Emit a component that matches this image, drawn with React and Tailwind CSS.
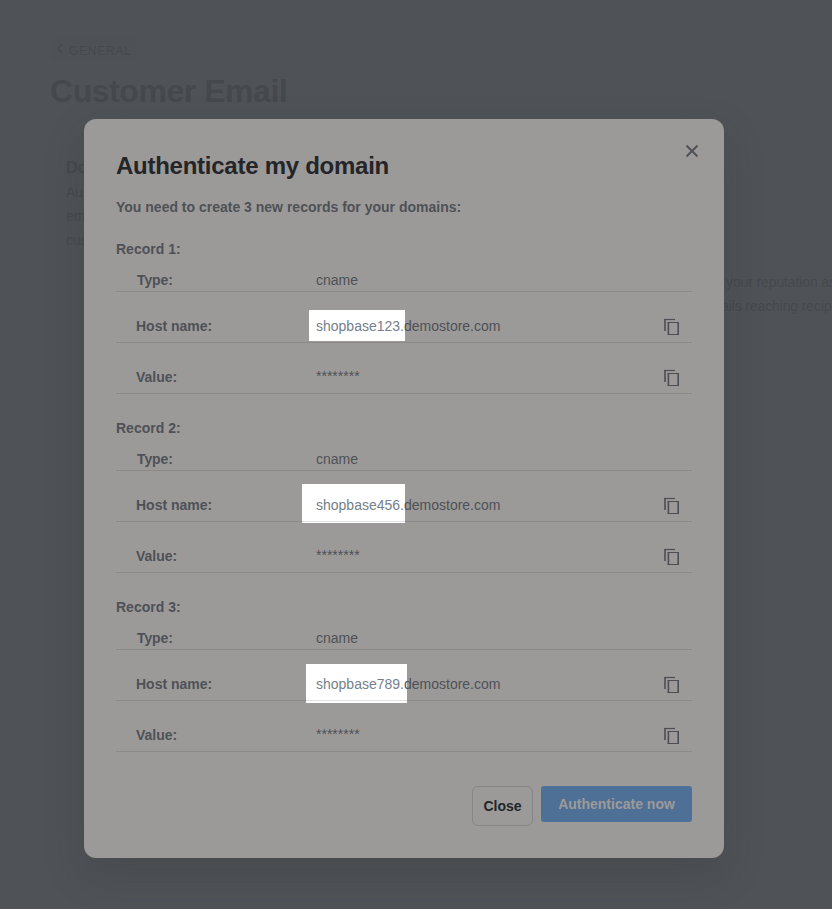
import React from "react";

const records = [
  {
    id: 1,
    host: "shopbase123.",
    highlight: "left-[309px] -ml-[116px] top-[18px] h-[31px] w-[96px]",
  },
  {
    id: 2,
    host: "shopbase456.",
    highlight: "left-[302px] -ml-[116px] top-[13px] h-[39px] w-[103px]",
  },
  {
    id: 3,
    host: "shopbase789.",
    highlight: "left-[306px] -ml-[116px] top-[14px] h-[39px] w-[101px]",
  },
];

function CopyIcon() {
  return (
    <svg
      className="mt-[2px] mr-[12px] h-[17px] w-4 shrink-0 text-[#4b4e54]"
      viewBox="0 0 16 17"
      fill="none"
      stroke="currentColor"
    >
      <path d="M0.3 1.5H11" strokeWidth="1.2" />
      <path d="M1 1V13" strokeWidth="1.6" />
      <path d="M3.5 4.5H15M3.5 16.5H15" strokeWidth="1.2" />
      <path d="M4.4 4.5V16.5M14.2 4.5V16.5" strokeWidth="1.6" />
    </svg>
  );
}

function Record({ record }) {
  return (
    <section className="mb-6">
      <h3 className="mb-[11px] font-bold">Record {record.id}:</h3>
      <div className="flex h-[22px] border-b border-[#8b8a89] pl-[21px]">
        <span className="w-[179px] font-bold tracking-[-0.1px]">Type:</span>
        <span>cname</span>
      </div>
      <div className="relative flex h-[51px] border-b border-[#8b8a89] pt-6 pl-5">
        {/* Spotlight behind the sub domain */}
        <span className={`absolute bg-white ${record.highlight}`}>
          {record.id > 1 && (
            <span
              className={`absolute left-0 h-px w-full bg-[#dfe3e8] ${
                record.id === 2 ? "bottom-px" : "bottom-[2px]"
              }`}
            />
          )}
        </span>
        <span className="w-[180px] font-bold">Host name:</span>
        <span className="relative flex-1">
          <span className="text-[#75808a]">{record.host}</span>
          demostore.com
        </span>
        <CopyIcon />
      </div>
      <div className="flex h-[51px] border-b border-[#8b8a89] pt-6 pl-5">
        <span className="w-[180px] font-bold">Value:</span>
        <span className="-mt-px flex-1">********</span>
        <CopyIcon />
      </div>
    </section>
  );
}

function BackgroundPage() {
  return (
    <div className="px-[50px] pt-[38px] text-[#45494d]">
      <div className="flex h-6 w-[86px] items-center rounded-sm bg-[#4e5256] pl-[7px]">
        <svg
          className="-mt-[3px] mr-[6px] h-[9px] w-[6px]"
          viewBox="0 0 6 9"
          fill="none"
          stroke="currentColor"
          strokeWidth="1.5"
        >
          <path d="M5 0.5L1 4.5L5 8.5" />
        </svg>
        <span className="mt-px text-[12px] tracking-[0.75px]">GENERAL</span>
      </div>
      <h1 className="mt-[9px] text-[32px] leading-10 font-bold tracking-[-0.45px] whitespace-nowrap">
        Customer Email
      </h1>
      <div className="mt-[45px] flex pl-4">
        <div className="w-[240px] shrink-0 text-[14px] leading-6">
          <p className="text-[16px] font-bold">Do</p>
          <p>Au</p>
          <p>em</p>
          <p>cus</p>
        </div>
        <div className="w-[420px] shrink-0 pt-[114px] pl-[420px] text-[14px] leading-6 tracking-[-0.12px] whitespace-nowrap">
          <p>your reputation as</p>
          <p className="-ml-[5px]">ails reaching recip</p>
        </div>
      </div>
    </div>
  );
}

function App() {
  return (
    <div className="relative h-[909px] w-[832px] overflow-hidden bg-[#4f5357] font-['Liberation_Sans',Arial,sans-serif]">
      <BackgroundPage />

      {/* Modal */}
      <div className="absolute top-[119px] left-[84px] h-[739px] w-[640px] rounded-xl bg-[#9c9a98] px-8 pt-8 text-[14px] leading-5 text-[#4e5157] shadow-[0_16px_40px_rgba(40,42,42,0.2)]">
        <div className="flex justify-between">
          <h2 className="text-[24px] leading-[30px] font-bold tracking-[-0.26px] text-[#232529]">
            Authenticate my domain
          </h2>
          <svg
            className="-mt-[6px] -mr-[6px] h-[12px] w-[12px]"
            viewBox="0 0 12 12"
            fill="none"
            stroke="currentColor"
            strokeWidth="2"
          >
            <path d="M0.5 0.5L11.5 11.5M11.5 0.5L0.5 11.5" />
          </svg>
        </div>
        <p className="mt-4 mb-[22px] font-bold">
          You need to create 3 new records for your domains:
        </p>

        {records.map((record) => (
          <Record key={record.id} record={record} />
        ))}

        <div className="mt-[34px] flex items-start justify-end gap-2">
          <button className="h-10 w-[61px] rounded-md border border-[#868686] font-bold text-[#20262a]">
            Close
          </button>
          <button className="h-9 w-[151px] rounded-[3px] bg-[#4f7096] font-bold text-[#9c9a98]">
            Authenticate now
          </button>
        </div>
      </div>
    </div>
  );
}

export default App;
